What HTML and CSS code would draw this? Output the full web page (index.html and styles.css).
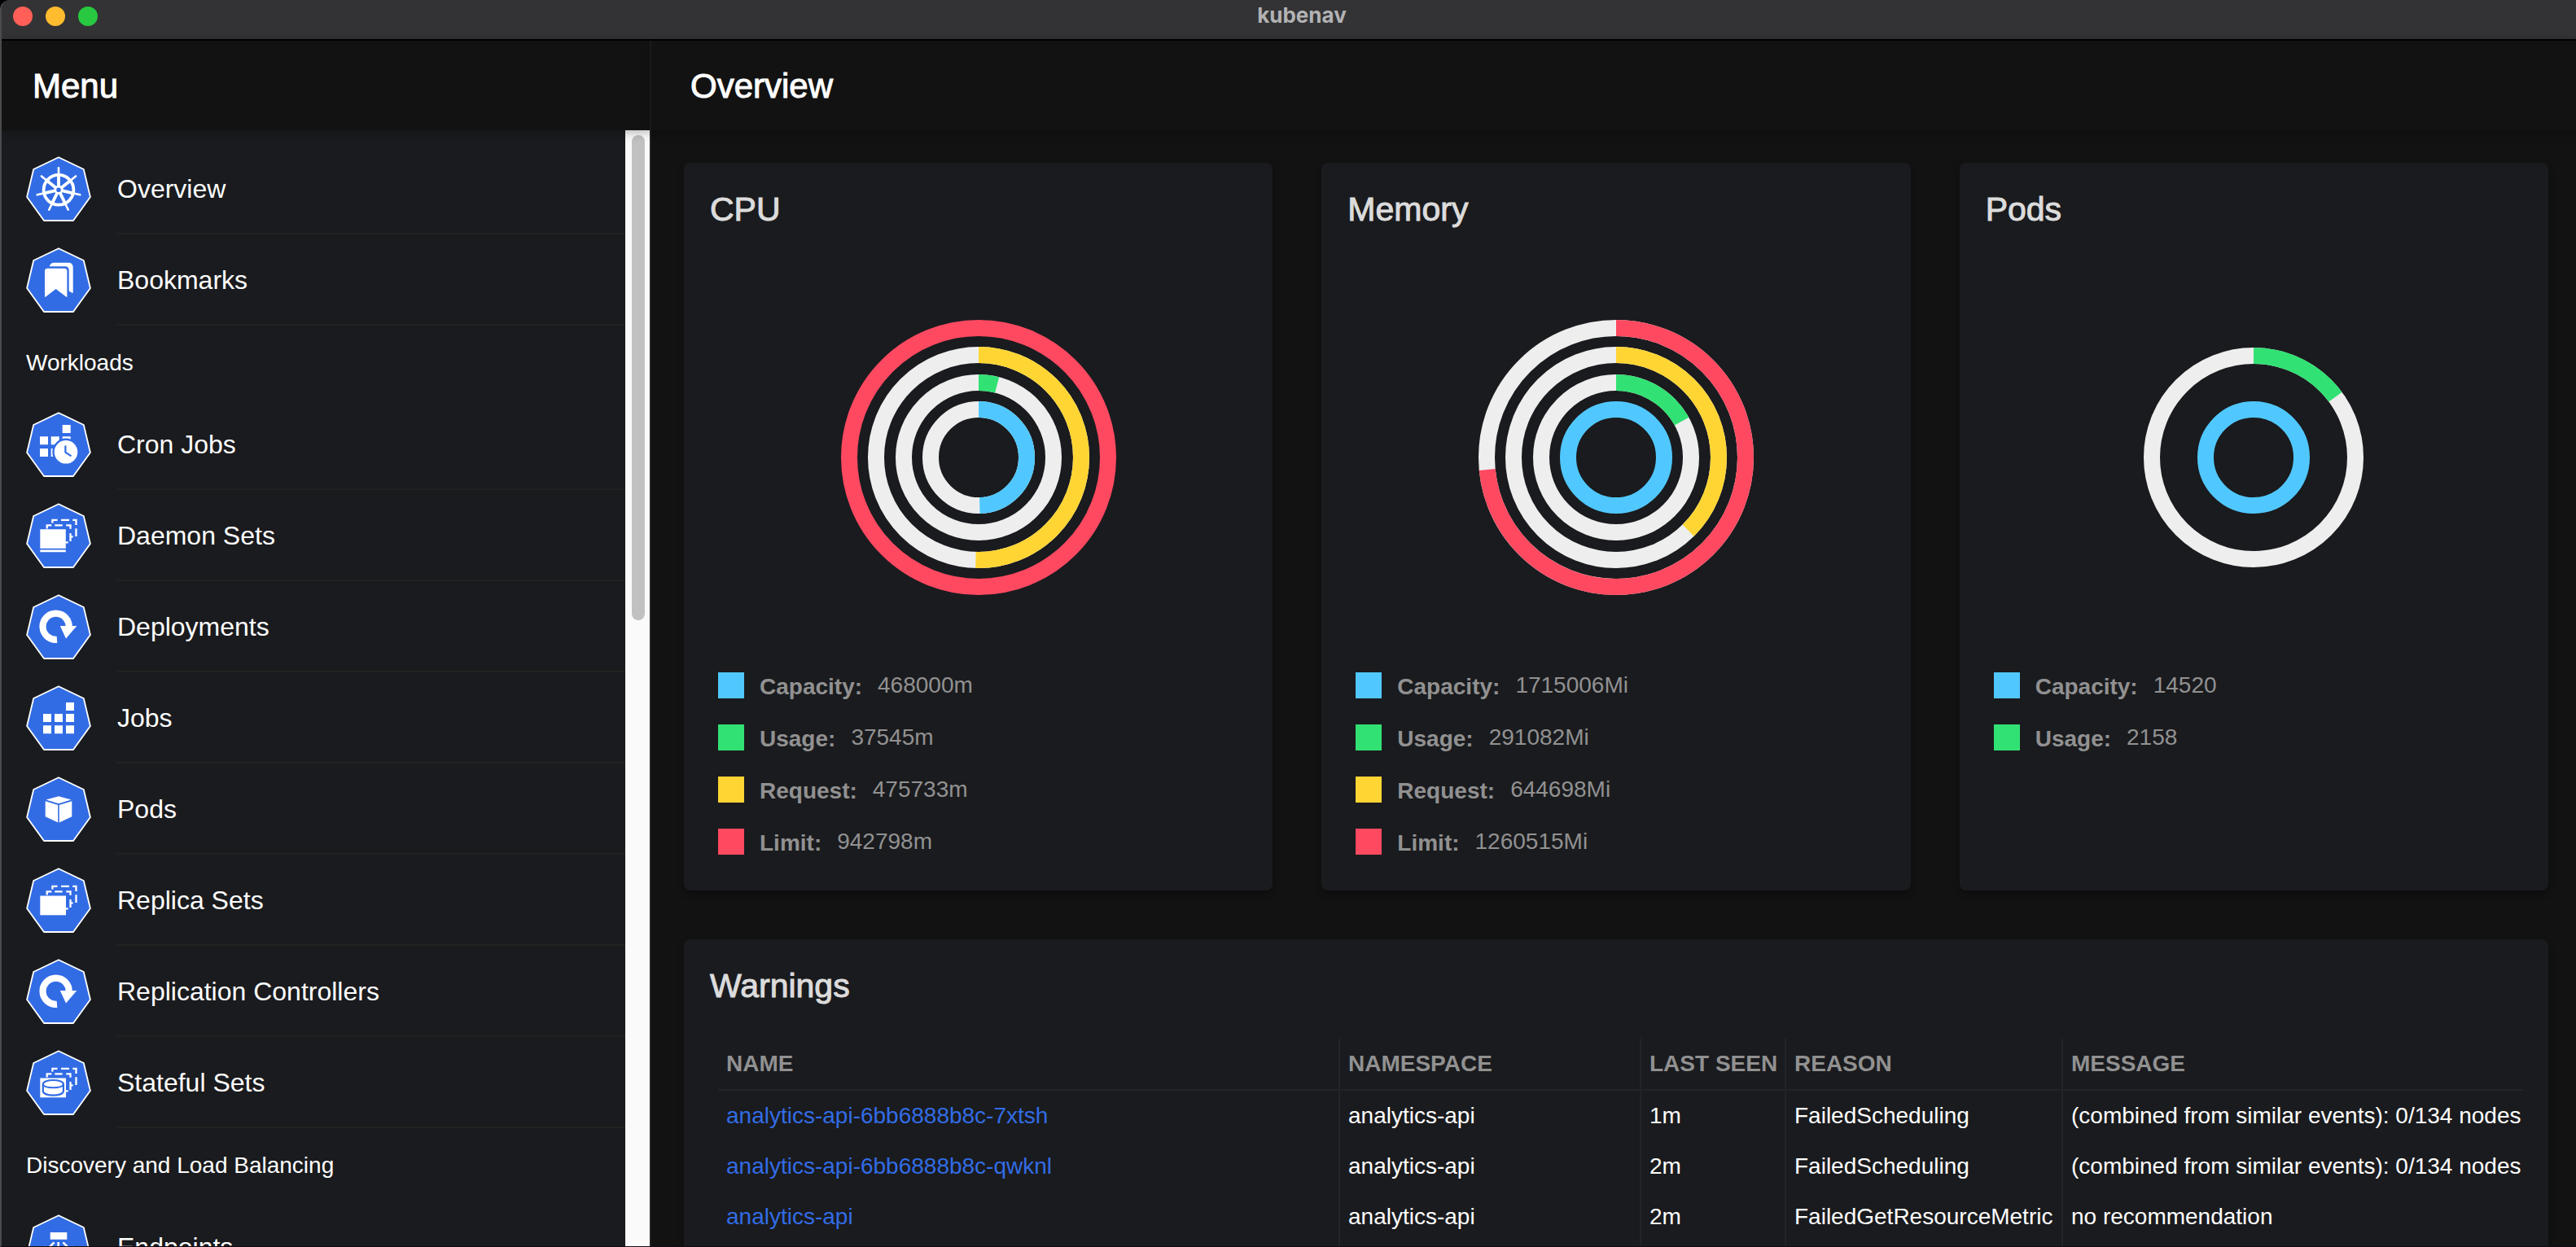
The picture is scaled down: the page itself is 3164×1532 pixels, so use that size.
FILE: index.html
```html
<!DOCTYPE html>
<html lang="en">
<head>
<meta charset="utf-8">
<title>kubenav</title>
<link rel="stylesheet" href="styles.css">
</head>
<body>
<svg class="sprite" aria-hidden="true">
  <symbol id="hept" viewBox="0 0 80 80">
    <path d="M40 1.2L70.8 16 78.9 50 58 79H22L1.1 50 9.2 16Z" fill="#326ce5" stroke="#fff" stroke-width="1.8" stroke-linejoin="round"/>
  </symbol>
  <symbol id="i-overview" viewBox="0 0 80 80">
    <use href="#hept"/>
    <g transform="translate(40 41.3)" stroke="#fff" fill="none" stroke-linecap="round">
      <circle r="18.4" stroke-width="3.8"/>
      <g id="spoke"><path d="M0-5V-27" stroke-width="2.6"/><path d="M0-5V-17" stroke-width="3.8" stroke-linecap="butt"/></g>
      <use href="#spoke" transform="rotate(51.43)"/>
      <use href="#spoke" transform="rotate(102.86)"/>
      <use href="#spoke" transform="rotate(154.29)"/>
      <use href="#spoke" transform="rotate(205.71)"/>
      <use href="#spoke" transform="rotate(257.14)"/>
      <use href="#spoke" transform="rotate(308.57)"/>
      <circle r="4.2" stroke-width="2.8"/>
    </g>
  </symbol>
  <symbol id="i-bookmarks" viewBox="0 0 80 80">
    <use href="#hept"/>
    <path fill="#fff" d="M26.500 25.700H47q3.400 0 3.400 3.400V60q0 1.500-1.300.6L36.600 51 24.300 60.600Q23 61.500 23 60V29.100q0-3.400 3.500-3.400Z"/>
    <path fill="#fff" d="M28.700 23.300q1.300-4.600 5.500-4.600H52q5.700 0 5.700 5.700V55q0 1.500-1.300.7l-3.700-2.300V28.500q0-5.200-5-5.200Z"/>
  </symbol>
  <symbol id="i-cronjobs" viewBox="0 0 80 80">
    <use href="#hept"/>
    <path fill="#fff" d="M44.700 16h10v10h-10zM17 30.300h10v10H17zM30.700 30.300h10v10h-10zM44.700 30.300h10v10h-10zM17 45h10v10H17zM30.700 45h10v10h-10z"/>
    <circle cx="49" cy="49.300" r="15.500" fill="#fff" stroke="#326ce5" stroke-width="2.400"/>
    <path d="M48.400 41.500V49.700L55.500 54.300" fill="none" stroke="#326ce5" stroke-width="2.200"/>
  </symbol>
  <symbol id="stack" viewBox="0 0 80 80">
    <path fill="none" stroke="#fff" stroke-width="2.300" d="M32.400 24.500V20.800H38.500M43 20.800H53M57.300 20.800H61.500V27M61.500 31.300V41M25.700 31.500V27.400H31.300M35.300 27.400H44.700M49.300 27.400H54.500V31.800M54.500 37V47M54.500 41.300H57.600M48.500 48.300H51.700"/>
  </symbol>
  <symbol id="i-daemonsets" viewBox="0 0 80 80">
    <use href="#hept"/><use href="#stack"/>
    <path fill="#fff" d="M17.300 32.300H48.800V55.700H17.300zM17.300 57.500H48.800V60.300H17.300z"/>
  </symbol>
  <symbol id="i-replicasets" viewBox="0 0 80 80">
    <use href="#hept"/><use href="#stack" y="2"/>
    <path fill="#fff" d="M17.300 34.500H49V58.300H17.300z"/>
  </symbol>
  <symbol id="i-statefulsets" viewBox="0 0 80 80">
    <use href="#hept"/><use href="#stack" y="2"/>
    <path fill="#fff" d="M17.300 34.500H49V58.300H17.300z"/>
    <path fill="#fff" stroke="#326ce5" stroke-width="2.200" d="M20.800 42C20.800 35.300 45.900 35.300 45.900 42V50.500C45.900 57.400 20.800 57.400 20.800 50.500Z"/>
    <path fill="none" stroke="#326ce5" stroke-width="2" d="M21 42.500C22.500 47.500 44.200 47.500 45.700 42.500"/>
  </symbol>
  <symbol id="i-deployments" viewBox="0 0 80 80">
    <use href="#hept"/>
    <path fill="none" stroke="#fff" stroke-width="8.200" d="M38 55.800A16.100 16.100 0 1 1 52.700 40.500"/>
    <path fill="#fff" d="M41.800 39H62.300L49 54.500Z"/>
  </symbol>
  <symbol id="i-jobs" viewBox="0 0 80 80">
    <use href="#hept"/>
    <path fill="#fff" d="M49 21h10v10H49zM21 35h10v10H21zM35 35h10v10H35zM49 35h10v10H49zM21 49.200h10v10H21zM35 49.200h10v10H35zM49 49.200h10v10H49z"/>
  </symbol>
  <symbol id="i-pods" viewBox="0 0 80 80">
    <use href="#hept"/>
    <path fill="#fff" d="M40 24.200L55.500 28.600 40 33.200 24.500 28.600ZM23.700 30.300L39.200 34.900V56.600L23.700 49.200ZM56.300 30.300L40.800 34.900V56.600L56.300 49.200Z"/>
  </symbol>
  <symbol id="i-endpoints" viewBox="0 0 80 80">
    <use href="#hept"/>
    <path fill="#fff" d="M29.700 22H50.300V30.700H29.700zM16 48H28V57H16zM34 48H46V57H34zM52 48H64V57H52z"/>
    <path fill="none" stroke="#fff" stroke-width="2.600" d="M39.700 34V45M34.500 34.300L26 43M45.500 34.300L54 43"/>
    <path fill="#fff" d="M23.300 38.300V45.500H30.500ZM56.700 38.300V45.500H49.500ZM35 41H45L40 46Z"/>
  </symbol>
</svg>

<div class="window">
  <header class="titlebar">
    <div class="lights">
      <button class="light light-close" aria-label="Close"></button>
      <button class="light light-min" aria-label="Minimize"></button>
      <button class="light light-max" aria-label="Zoom"></button>
    </div>
    <div class="app-name">kubenav</div>
  </header>

  <div class="panes">
    <aside class="sidebar">
      <header class="toolbar"><h1 class="toolbar-title menu-title">Menu</h1></header>
      <div class="scroller">
        <nav class="menu">
          <a class="item" href="#"><svg class="icon"><use href="#i-overview"/></svg><span class="label">Overview</span></a>
          <a class="item" href="#"><svg class="icon"><use href="#i-bookmarks"/></svg><span class="label">Bookmarks</span></a>
          <h2 class="group">Workloads</h2>
          <a class="item" href="#"><svg class="icon"><use href="#i-cronjobs"/></svg><span class="label">Cron Jobs</span></a>
          <a class="item" href="#"><svg class="icon"><use href="#i-daemonsets"/></svg><span class="label">Daemon Sets</span></a>
          <a class="item" href="#"><svg class="icon"><use href="#i-deployments"/></svg><span class="label">Deployments</span></a>
          <a class="item" href="#"><svg class="icon"><use href="#i-jobs"/></svg><span class="label">Jobs</span></a>
          <a class="item" href="#"><svg class="icon"><use href="#i-pods"/></svg><span class="label">Pods</span></a>
          <a class="item" href="#"><svg class="icon"><use href="#i-replicasets"/></svg><span class="label">Replica Sets</span></a>
          <a class="item" href="#"><svg class="icon"><use href="#i-deployments"/></svg><span class="label">Replication Controllers</span></a>
          <a class="item" href="#"><svg class="icon"><use href="#i-statefulsets"/></svg><span class="label">Stateful Sets</span></a>
          <h2 class="group">Discovery and Load Balancing</h2>
          <a class="item" href="#"><svg class="icon"><use href="#i-endpoints"/></svg><span class="label">Endpoints</span></a>
        </nav>
        <div class="track"><div class="thumb"></div></div>
      </div>
    </aside>

    <main class="main">
      <header class="toolbar"><h1 class="toolbar-title">Overview</h1></header>
      <div class="content">
        <div class="cards">
          <section class="card">
            <h2 class="card-title">CPU</h2>
            <svg class="chart" viewBox="-170 -170 340 340" role="img" aria-label="CPU usage">
              <circle class="ring red" r="159"/>
              <circle class="ring" r="126"/><circle class="ring yellow" r="126" pathLength="100" stroke-dasharray="50.460 100"/>
              <circle class="ring" r="92"/><circle class="ring green" r="92" pathLength="100" stroke-dasharray="3.980 100"/>
              <circle class="ring" r="59"/><circle class="ring blue" r="59" pathLength="100" stroke-dasharray="49.640 100"/>
            </svg>
            <dl class="legend">
              <div class="entry"><i class="swatch bg-blue"></i><dt>Capacity:</dt><dd>468000m</dd></div>
              <div class="entry"><i class="swatch bg-green"></i><dt>Usage:</dt><dd>37545m</dd></div>
              <div class="entry"><i class="swatch bg-yellow"></i><dt>Request:</dt><dd>475733m</dd></div>
              <div class="entry"><i class="swatch bg-red"></i><dt>Limit:</dt><dd>942798m</dd></div>
            </dl>
          </section>
          <section class="card">
            <h2 class="card-title">Memory</h2>
            <svg class="chart" viewBox="-170 -170 340 340" role="img" aria-label="Memory usage">
              <circle class="ring" r="159"/><circle class="ring red" r="159" pathLength="100" stroke-dasharray="73.500 100"/>
              <circle class="ring" r="126"/><circle class="ring yellow" r="126" pathLength="100" stroke-dasharray="37.590 100"/>
              <circle class="ring" r="92"/><circle class="ring green" r="92" pathLength="100" stroke-dasharray="16.970 100"/>
              <circle class="ring blue" r="59"/>
            </svg>
            <dl class="legend">
              <div class="entry"><i class="swatch bg-blue"></i><dt>Capacity:</dt><dd>1715006Mi</dd></div>
              <div class="entry"><i class="swatch bg-green"></i><dt>Usage:</dt><dd>291082Mi</dd></div>
              <div class="entry"><i class="swatch bg-yellow"></i><dt>Request:</dt><dd>644698Mi</dd></div>
              <div class="entry"><i class="swatch bg-red"></i><dt>Limit:</dt><dd>1260515Mi</dd></div>
            </dl>
          </section>
          <section class="card">
            <h2 class="card-title">Pods</h2>
            <svg class="chart" viewBox="-170 -170 340 340" role="img" aria-label="Pod usage">
              <circle class="ring" r="125"/><circle class="ring green" r="125" pathLength="100" stroke-dasharray="14.860 100"/>
              <circle class="ring blue" r="59"/>
            </svg>
            <dl class="legend">
              <div class="entry"><i class="swatch bg-blue"></i><dt>Capacity:</dt><dd>14520</dd></div>
              <div class="entry"><i class="swatch bg-green"></i><dt>Usage:</dt><dd>2158</dd></div>
            </dl>
          </section>
        </div>

        <section class="card warnings">
          <h2 class="card-title">Warnings</h2>
          <table class="events">
            <colgroup><col><col class="c-ns"><col class="c-seen"><col class="c-reason"><col class="c-msg"></colgroup>
            <thead>
              <tr><th>NAME</th><th>NAMESPACE</th><th>LAST SEEN</th><th>REASON</th><th>MESSAGE</th></tr>
            </thead>
            <tbody>
              <tr><td><a href="#">analytics-api-6bb6888b8c-7xtsh</a></td><td>analytics-api</td><td>1m</td><td>FailedScheduling</td><td>(combined from similar events): 0/134 nodes</td></tr>
              <tr><td><a href="#">analytics-api-6bb6888b8c-qwknl</a></td><td>analytics-api</td><td>2m</td><td>FailedScheduling</td><td>(combined from similar events): 0/134 nodes</td></tr>
              <tr><td><a href="#">analytics-api</a></td><td>analytics-api</td><td>2m</td><td>FailedGetResourceMetric</td><td>no recommendation</td></tr>
              <tr><td></td><td></td><td></td><td></td><td></td></tr>
            </tbody>
          </table>
        </section>
      </div>
    </main>
  </div>
</div>
</body>
</html>
```
FILE: styles.css
```css
:root {
  --bg: #121212;
  --surface: #1a1b1e;
  --divider: #222222;
  --rule: #222428;
  --blue: #50c8ff;
  --green: #32e174;
  --yellow: #ffd534;
  --red: #ff4961;
}

* { box-sizing: border-box; }

body {
  margin: 0;
  background: #000;
  color: #fff;
  font-family: "Liberation Sans", Arial, sans-serif;
  font-size: 28px;
}

h1, h2, dl, dd { margin: 0; }
a { color: inherit; text-decoration: none; }
.sprite { display: block; width: 0; height: 0; }

.window {
  display: flex;
  flex-direction: column;
  height: 100vh;
  overflow: hidden;
  background: var(--bg);
  border-left: 2px solid #4a4b4d;
  border-bottom: 1px solid #150a12;
  border-top-left-radius: 12px;
}

/* Title bar */
.titlebar {
  display: flex;
  align-items: center;
  flex: none;
  height: 50px;
  padding: 0 14px;
  background: #333335;
  border-bottom: 2px solid #000;
}
.lights { display: flex; gap: 16px; width: 104px; margin-top: -8px; }
.light { width: 24px; height: 24px; padding: 0; border: 0; border-radius: 50%; }
.light-close { background: #ff5f57; }
.light-min { background: #febc2e; }
.light-max { background: #28c840; }
.app-name {
  flex: 1;
  padding-right: 72px;
  margin-top: -10px;
  text-align: center;
  color: #b2b2b4;
  font: 700 26px/32px Inter, sans-serif;
}

.panes { display: flex; flex: 1; min-height: 0; }

.toolbar {
  position: relative;
  flex: none;
  height: 110px;
  padding: 0 48px;
  background: var(--bg);
  box-shadow: 0 2px 12px rgba(0, 0, 0, .3);
}
.toolbar-title { font-size: 42px; font-weight: 400; line-height: 112px; -webkit-text-stroke: 1px currentColor; }
.menu-title { margin-left: -10px; }

/* Sidebar */
.sidebar {
  display: flex;
  flex-direction: column;
  flex: none;
  width: 798px;
  border-right: 2px solid var(--divider);
}
.scroller { display: flex; flex: 1; min-height: 0; background: var(--surface); }
.menu { flex: 1; padding-top: 16px; overflow: hidden; }
.item { display: flex; align-items: center; gap: 32px; height: 112px; padding-left: 30px; }
.icon { flex: none; width: 80px; height: 80px; }
.label {
  flex: 1;
  height: 112px;
  font-size: 32px;
  line-height: 112px;
  border-bottom: 2px solid var(--divider);
}
.group { height: 90px; padding-left: 30px; font-size: 28px; font-weight: 400; line-height: 92px; }
.track { flex: none; width: 30px; padding: 6px 6px 6px 8px; background: #fafafa; }
.thumb { height: 596px; border-radius: 8px; background: #c1c1c1; }

/* Main area */
.main { display: flex; flex-direction: column; flex: 1; min-width: 0; }
.content {
  display: flex;
  flex-direction: column;
  flex: 1;
  gap: 60px;
  min-height: 0;
  padding: 40px 34px 0 40px;
  overflow: hidden;
}
.cards { display: grid; grid-template-columns: repeat(3, 1fr); gap: 60px; }
.card {
  padding: 32px 32px 44px;
  background: var(--surface);
  border-radius: 8px;
  box-shadow: 0 4px 8px rgba(0, 0, 0, .3);
}
.card-title {
  color: #dcdcdc;
  font-size: 41px;
  font-weight: 400;
  line-height: 50px;
  -webkit-text-stroke: 1px currentColor;
}

.chart { display: block; width: 340px; height: 340px; margin: 110px auto 94px; transform: rotate(-90deg); }
.ring { fill: none; stroke: #eee; stroke-width: 20px; }
.blue { stroke: var(--blue); }
.green { stroke: var(--green); }
.yellow { stroke: var(--yellow); }
.red { stroke: var(--red); }

.legend { display: grid; gap: 32px; margin-left: 10px; color: #919191; }
.entry { display: flex; gap: 19px; height: 32px; line-height: 32px; }
.entry dt { padding-top: 2px; font-weight: 700; }
.swatch { width: 32px; height: 32px; }
.bg-blue { background: var(--blue); }
.bg-green { background: var(--green); }
.bg-yellow { background: var(--yellow); }
.bg-red { background: var(--red); }

/* Warnings table */
.warnings { flex: none; }
.events {
  width: calc(100% - 10px);
  margin: 40px 0 0 10px;
  table-layout: fixed;
  border-collapse: separate;
  border-spacing: 0;
}
.c-ns { width: 370px; }
.c-seen { width: 178px; }
.c-reason { width: 340px; }
.c-msg { width: 564px; }
.events th, .events td {
  height: 62px;
  padding: 0 0 0 10px;
  border-right: 2px solid var(--rule);
  text-align: left;
  white-space: nowrap;
}
.events th {
  height: 64px;
  border-bottom: 2px solid var(--rule);
  color: #919191;
}
.events th:last-child, .events td:last-child { border-right: 0; }
.events a { color: #326ce5; }
```
